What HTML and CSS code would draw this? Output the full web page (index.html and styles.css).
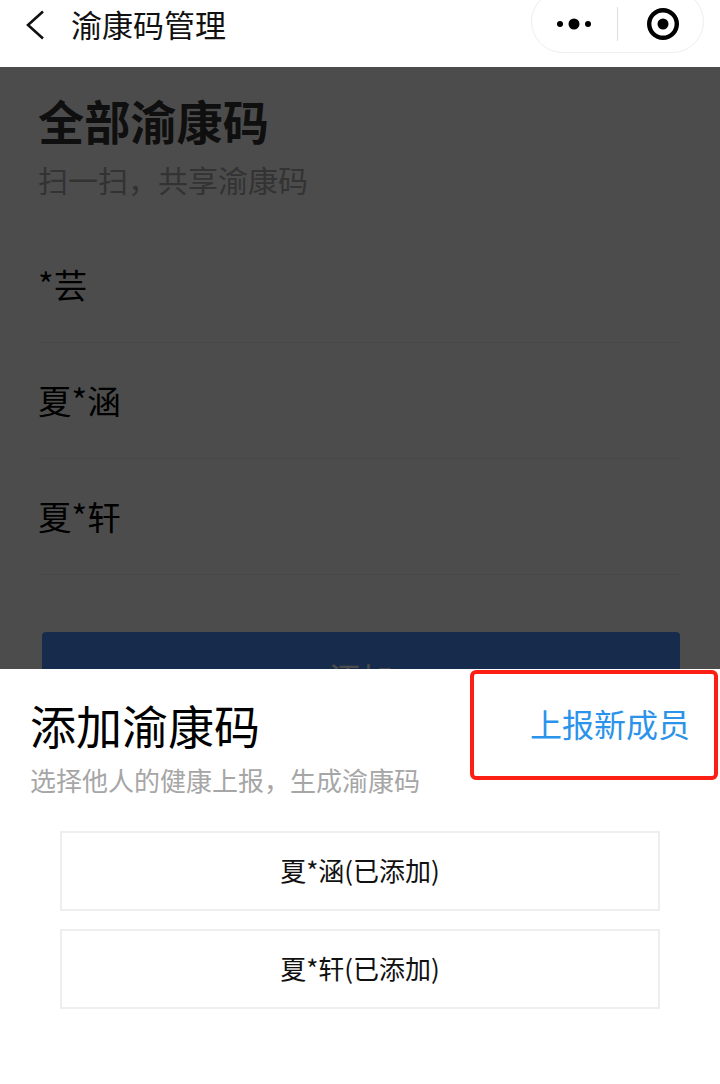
FILE: index.html
```html
<!DOCTYPE html>
<html lang="zh-CN">
<head>
<meta charset="utf-8">
<title>渝康码管理</title>
<link rel="stylesheet" href="styles.css">
</head>
<body>
<div class="page">
  <header class="nav">
    <svg class="back" width="22" height="32" viewBox="0 0 22 32"><path d="M19 2.500 L4 16 L19 29.500" fill="none" stroke="#111" stroke-width="2.600"/></svg>
    <h1 class="nav-title">渝康码管理</h1>
    <div class="capsule">
      <svg class="more" width="34" height="14" viewBox="0 0 34 14"><circle cx="3" cy="7" r="3" fill="#000"/><circle cx="17" cy="7" r="5.500" fill="#000"/><circle cx="31" cy="7" r="3" fill="#000"/></svg>
      <span class="capsule-line"></span>
      <svg class="target" width="32" height="32" viewBox="0 0 32 32"><circle cx="16" cy="16" r="13.800" fill="none" stroke="#000" stroke-width="4.400"/><circle cx="16" cy="16" r="5.500" fill="#000"/></svg>
    </div>
  </header>
  <main class="content">
    <h2 class="title">全部渝康码</h2>
    <p class="subtitle">扫一扫，共享渝康码</p>
    <ul class="list">
      <li class="row">*芸</li>
      <li class="row">夏*涵</li>
      <li class="row">夏*轩</li>
    </ul>
    <button class="add-btn">添加</button>
  </main>
  <div class="mask"></div>
  <section class="sheet">
    <div class="sheet-head">
      <div>
        <h3 class="sheet-title">添加渝康码</h3>
        <p class="sheet-sub">选择他人的健康上报，生成渝康码</p>
      </div>
      <a class="report">上报新成员</a>
    </div>
    <div class="options">
      <div class="option">夏*涵(已添加)</div>
      <div class="option">夏*轩(已添加)</div>
    </div>
  </section>
  <div class="highlight"></div>
</div>
</body>
</html>
```
FILE: styles.css
```css
* { box-sizing: border-box; }
html, body { margin: 0; padding: 0; }
body { background: #fff; font-family: "Noto Sans CJK SC", "Noto Sans", sans-serif; color: #000; }
.page { position: relative; width: 720px; height: 1084px; overflow: hidden; }

.nav { position: relative; z-index: 3; height: 67px; background: #fff; display: flex; align-items: center; padding-left: 24px; }
.back { margin-top: -18px; flex: none; }
.nav-title { margin: -19px 0 0 25px; font-size: 31px; line-height: 40px; font-weight: 400; color: #111; }
.capsule { position: absolute; left: 531px; top: -10px; width: 173px; height: 63px; border: 1px solid #eee; border-radius: 32px; display: flex; align-items: center; }
.more { margin: 5px 0 0 25px; }
.capsule-line { width: 1px; height: 34px; background: #ddd; margin: 5px 0 0 26px; }
.target { margin: 5px 0 0 29px; }

.content { padding: 25px 38px 0; }
.title { margin: 0; font-size: 46.200px; line-height: 56px; font-weight: 700; color: #333; }
.subtitle { margin: 9px 0 0; font-size: 30px; line-height: 44px; color: #aaa; }
.list { list-style: none; margin: 26px 0 0 1px; padding: 0; }
.row { height: 116px; border-bottom: 1px solid #eee; font-size: 33.500px; line-height: 40px; padding-top: 37px; text-indent: -1px; color: #000; }
.add-btn { display: block; width: 638px; height: 90px; margin: 57px 0 0 4px; border: 0; border-radius: 4px; background: #4f95fd; color: #fff; font: 32px/64px "Noto Sans CJK SC", sans-serif; padding: 0; }

.mask { position: absolute; inset: 67px 0 0 0; background: rgba(0, 0, 0, 0.7); z-index: 1; }

.sheet { position: absolute; z-index: 2; left: 0; right: 0; top: 669px; bottom: 0; background: #fff; padding: 25px 30px 0; }
.sheet-head { display: flex; justify-content: space-between; }
.sheet-title { margin: 0; font-size: 46px; line-height: 60px; font-weight: 400; color: #000; }
.sheet-sub { margin: 6px 0 0; font-size: 26px; line-height: 40px; color: #a6a6a6; }
.report { margin: 6px 0 0 0; font-size: 32px; line-height: 46px; color: #2b93ea; }
.options { margin: 31px 30px 0; display: flex; flex-direction: column; gap: 18px; }
.option { height: 80px; border: 2px solid #eee; padding-bottom: 4px; display: flex; align-items: center; justify-content: center; font-size: 26px; color: #111; }

.highlight { position: absolute; z-index: 4; left: 470px; top: 670px; width: 248px; height: 110px; border: 4px solid #fb1f14; border-radius: 6px; }
```
